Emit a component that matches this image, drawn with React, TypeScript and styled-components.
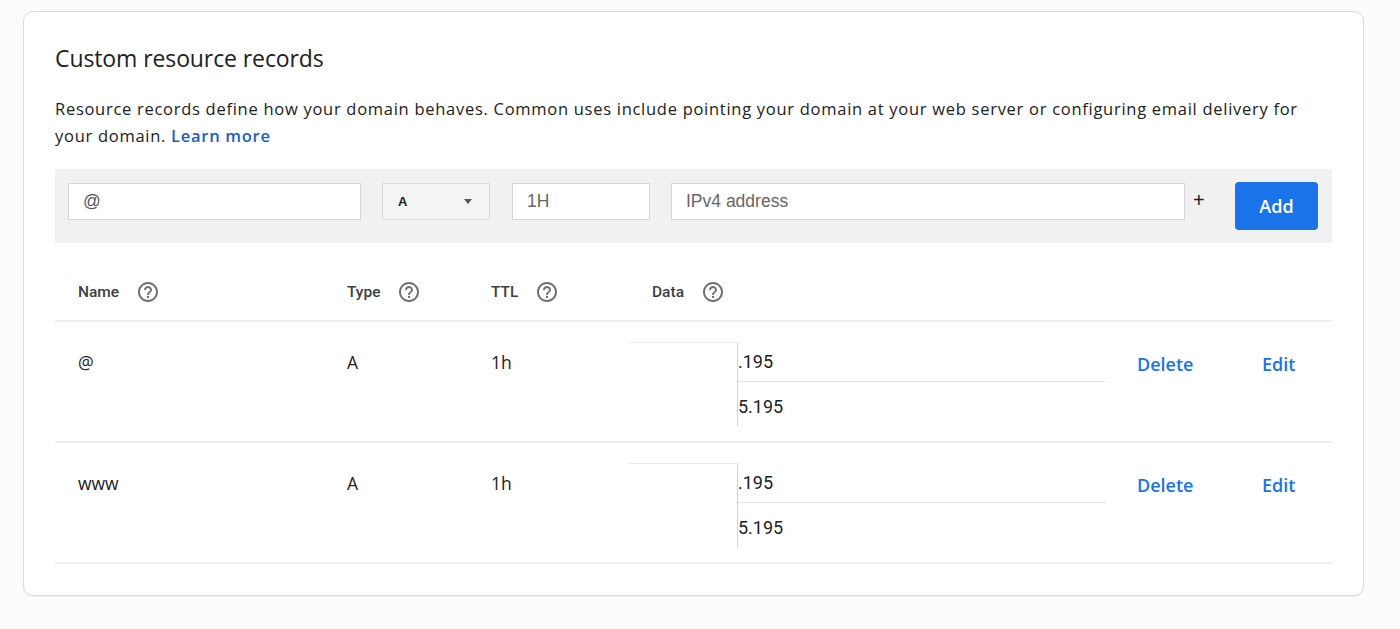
import React from "react";
import styled, { createGlobalStyle } from "styled-components";

const Global = createGlobalStyle`
  html, body { margin: 0; padding: 0; background: #fbfbfb; }
  body { font-family: Roboto, "Liberation Sans", Arial, sans-serif; color: #202124; }
  * { box-sizing: border-box; }
`;

const Page = styled.div`
  padding: 11px 0 0 23px;
  width: 1400px;
  height: 629px;
`;

const Card = styled.section`
  width: 1341px;
  height: 585px;
  background: #fff;
  border: 1px solid #dadce0;
  border-radius: 10px;
  box-shadow: 0 1px 1px rgba(0, 0, 0, 0.06);
  padding: 32px 31px 0 31px;
`;

const Title = styled.h2`
  margin: 0;
  font-family: "Open Sans", Roboto, sans-serif;
  font-weight: 400;
  font-size: 23px;
  line-height: 28px;
  color: #202124;
  letter-spacing: -0.1px;
`;

const Description = styled.p`
  margin: 23px 0 0;
  font-family: "Open Sans", Roboto, sans-serif;
  font-size: 16.5px;
  line-height: 27px;
  color: #202124;
  letter-spacing: 0.72px;
`;

const Link = styled.a`
  color: #1a5fc2;
  font-weight: 600;
  text-decoration: none;
`;

const FormBar = styled.div`
  margin-top: 20px;
  height: 74px;
  background: #f1f1f1;
  display: flex;
  align-items: flex-start;
  padding: 13px 14px 0 13px;
`;

const TextInput = styled.input<{ $w: number; $grow?: boolean }>`
  width: ${(p) => p.$w}px;
  height: 37px;
  margin-top: 1px;
  margin-right: ${(p) => (p.$grow ? 0 : 21)}px;
  border: 1px solid #d6d6d6;
  background: #fff;
  padding: 0 14px;
  font-family: "Liberation Sans", Arial, sans-serif;
  font-size: 17.5px;
  color: #555;
  outline: none;
  &::placeholder { color: #666; }
`;

const Select = styled.div`
  width: 108px;
  height: 37px;
  margin-top: 1px;
  margin-right: 22px;
  border: 1px solid #dcdcdc;
  background: #f4f4f4;
  display: flex;
  align-items: center;
  justify-content: space-between;
  padding: 0 17px 0 15px;
  font-family: "Liberation Sans", Arial, sans-serif;
  font-weight: 700;
  font-size: 13px;
  color: #222;
`;

const Caret = styled.span`
  width: 0;
  height: 0;
  border-left: 4.5px solid transparent;
  border-right: 4.5px solid transparent;
  border-top: 5px solid #555;
`;

const Plus = styled.span`
  width: 50px;
  padding-left: 8px;
  font-family: "Liberation Sans", Arial, sans-serif;
  font-size: 20px;
  line-height: 37px;
  color: #222;
`;

const AddButton = styled.button`
  width: 83px;
  height: 48px;
  border: none;
  border-radius: 4px;
  background: #1a73e8;
  color: #fff;
  font-family: "Open Sans", Roboto, sans-serif;
  font-weight: 600;
  font-size: 18px;
  cursor: pointer;
`;

const Grid = styled.div`
  display: grid;
  grid-template-columns: 269px 144px 161px 485px 125px 1fr;
  padding-left: 23px;
  border-bottom: 2px solid #eeeeee;
`;

const HeaderRow = styled(Grid)`
  height: 79px;
  padding-top: 37px;
`;

const HeaderCell = styled.div`
  display: flex;
  align-items: center;
  gap: 17px;
  font-size: 15.5px;
  font-weight: 500;
  color: #3c4043;
  height: 24px;
`;

const Row = styled(Grid)`
  height: 121px;
  padding-top: 28px;
`;

const Cell = styled.div`
  font-family: "Open Sans", Roboto, sans-serif;
  font-size: 17.5px;
  line-height: 24px;
  color: #202124;
`;

const DataCell = styled.div`
  display: flex;
  align-items: flex-start;
`;

const Redaction = styled.div`
  width: 110px;
  height: 84px;
  margin: -8px 0 0 -24px;
  background: #fff;
  border-top: 1px solid #ececec;
  border-right: 1px solid #d4d4d4;
  flex: none;
`;

const Values = styled.ul`
  list-style: none;
  margin: 0;
  padding: 0;
  width: 368px;
`;

const Value = styled.li`
  font-size: 18px;
  line-height: 24px;
  color: #202124;
  padding: 0 0 7px;
  & + & {
    border-top: 1px solid #e3e3e3;
    padding-top: 13px;
  }
`;

const Action = styled.a`
  font-family: "Open Sans", Roboto, sans-serif;
  font-weight: 600;
  font-size: 18px;
  line-height: 28px;
  color: #1a73e8;
  text-decoration: none;
  cursor: pointer;
`;

const HelpIcon = () => (
  <svg width="24" height="24" viewBox="0 0 24 24" fill="#6f6f6f" aria-hidden>
    <path d="M11 18h2v-2h-2v2zm1-16C6.48 2 2 6.48 2 12s4.48 10 10 10 10-4.48 10-10S17.52 2 12 2zm0 18c-4.41 0-8-3.59-8-8s3.59-8 8-8 8 3.59 8 8-3.59 8-8 8zm0-14c-2.21 0-4 1.790-4 4h2c0-1.1.9-2 2-2s2 .9 2 2c0 2-3 1.75-3 5h2c0-2.25 3-2.5 3-5 0-2.21-1.79-4-4-4z" />
  </svg>
);

const records = [
  { name: "@", type: "A", ttl: "1h", data: [".195", "5.195"] },
  { name: "www", type: "A", ttl: "1h", data: [".195", "5.195"] },
];

export default function App() {
  return (
    <>
      <Global />
      <Page>
        <Card>
          <Title>Custom resource records</Title>
          <Description>
            Resource records define how your domain behaves. Common uses include pointing your domain at your web
            server or configuring email delivery for your domain. <Link href="#">Learn more</Link>
          </Description>
          <FormBar>
            <TextInput $w={293} defaultValue="@" />
            <Select>
              A<Caret />
            </Select>
            <TextInput $w={138} placeholder="1H" />
            <TextInput $w={514} $grow placeholder="IPv4 address" />
            <Plus>+</Plus>
            <AddButton>Add</AddButton>
          </FormBar>
          <HeaderRow>
            {["Name", "Type", "TTL", "Data"].map((h) => (
              <HeaderCell key={h}>
                {h}
                <HelpIcon />
              </HeaderCell>
            ))}
          </HeaderRow>
          {records.map((r) => (
            <Row key={r.name}>
              <Cell>{r.name}</Cell>
              <Cell>{r.type}</Cell>
              <Cell>{r.ttl}</Cell>
              <DataCell>
                <Redaction />
                <Values>
                  {r.data.map((d) => (
                    <Value key={d}>{d}</Value>
                  ))}
                </Values>
              </DataCell>
              <Action>Delete</Action>
              <Action>Edit</Action>
            </Row>
          ))}
        </Card>
      </Page>
    </>
  );
}
